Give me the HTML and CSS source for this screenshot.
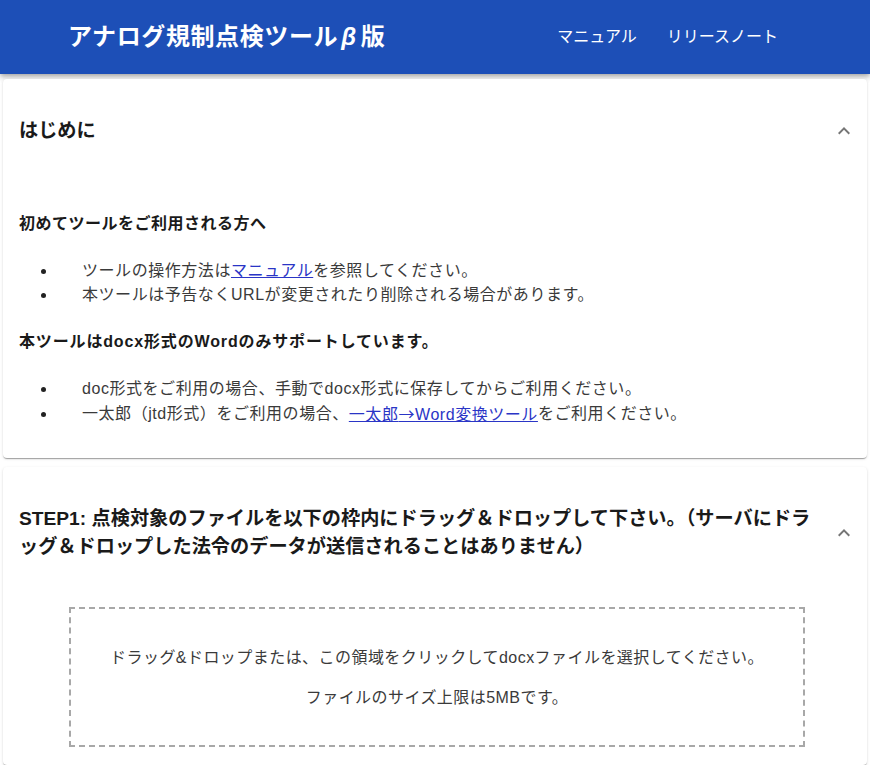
FILE: index.html
```html
<!DOCTYPE html>
<html lang="ja">
<head>
<meta charset="utf-8">
<title>アナログ規制点検ツールβ版</title>
<link rel="stylesheet" href="styles.css">
</head>
<body>
<header class="appbar">
  <h1 class="app-title">アナログ規制点検ツール<span class="beta">β</span>版</h1>
  <nav class="app-nav">
    <a class="nav-link" href="#">マニュアル</a>
    <a class="nav-link" href="#">リリースノート</a>
  </nav>
</header>
<main class="main">
  <section class="card card-intro">
    <div class="summary summary-intro">
      <h2 class="summary-title">はじめに</h2>
      <span class="expand-icon">
        <svg viewBox="0 0 24 24" width="24" height="24"><path d="M12 8l-6 6 1.41 1.41L12 10.83l4.59 4.58L18 14z"/></svg>
      </span>
    </div>
    <div class="details details-intro">
      <p class="lead">初めてツールをご利用される方へ</p>
      <ul class="bullets">
        <li>ツールの操作方法は<a class="link" href="#">マニュアル</a>を参照してください。</li>
        <li>本ツールは予告なくURLが変更されたり削除される場合があります。</li>
      </ul>
      <p class="lead lead-wide">本ツールはdocx形式のWordのみサポートしています。</p>
      <ul class="bullets">
        <li>doc形式をご利用の場合、手動でdocx形式に保存してからご利用ください。</li>
        <li>一太郎（jtd形式）をご利用の場合、<a class="link" href="#">一太郎<span class="arrow">→</span>Word変換ツール</a>をご利用ください。</li>
      </ul>
    </div>
  </section>
  <section class="card card-step">
    <div class="summary summary-step">
      <h2 class="summary-title">STEP1: 点検対象のファイルを以下の枠内にドラッグ＆ドロップして下さい。（サーバにドラッグ＆ドロップした法令のデータが送信されることはありません）</h2>
      <span class="expand-icon">
        <svg viewBox="0 0 24 24" width="24" height="24"><path d="M12 8l-6 6 1.41 1.41L12 10.83l4.59 4.58L18 14z"/></svg>
      </span>
    </div>
    <div class="details details-step">
      <div class="dropzone">
        <p class="drop-text">ドラッグ&amp;ドロップまたは、この領域をクリックしてdocxファイルを選択してください。</p>
        <p class="drop-text">ファイルのサイズ上限は5MBです。</p>
      </div>
    </div>
  </section>
</main>
</body>
</html>
```

FILE: styles.css
```css
* { box-sizing: border-box; }

html, body {
  margin: 0;
  padding: 0;
  background: #ffffff;
}

body {
  font-family: "Liberation Sans", "Noto Sans CJK JP", sans-serif;
  color: #1f1f1f;
}

.appbar {
  height: 74px;
  background: #1d4fb7;
  color: #ffffff;
  display: flex;
  align-items: center;
  justify-content: space-between;
  padding: 0 92px 0 68px;
  box-shadow: 0 2px 4px -1px rgba(0,0,0,0.2), 0 4px 5px 0 rgba(0,0,0,0.14), 0 1px 10px 0 rgba(0,0,0,0.12);
}

.app-title {
  margin: 0;
  font-size: 24px;
  font-weight: 700;
  line-height: 32px;
  letter-spacing: 0.6px;
}

.beta {
  display: inline-block;
  margin: 0 4px 0 3px;
  font-style: italic;
}

.app-nav {
  display: flex;
  gap: 30px;
}

.nav-link {
  color: #ffffff;
  text-decoration: none;
  font-size: 16px;
  line-height: 24px;
}

.main {
  padding: 5px 3px 0;
  display: flex;
  flex-direction: column;
  gap: 9px;
}

.card {
  background: #ffffff;
  border-radius: 4px;
  box-shadow: 0 2px 1px -1px rgba(0,0,0,0.2), 0 1px 1px 0 rgba(0,0,0,0.14), 0 1px 3px 0 rgba(0,0,0,0.12);
}

.summary {
  display: flex;
  align-items: center;
  padding: 0 11px 0 16px;
}

.summary-intro {
  height: 104px;
}

.summary-step {
  padding-top: 38px;
  padding-bottom: 0;
}

.summary-title {
  flex: 1;
  margin: 0;
  font-size: 19.2px;
  font-weight: 700;
  line-height: 28px;
  color: #1a1a1a;
}

.expand-icon {
  width: 24px;
  height: 24px;
  display: flex;
  margin-left: 4px;
}

.expand-icon svg {
  fill: rgba(0,0,0,0.54);
}

.details-intro {
  padding: 29px 16px 31px;
}

.lead {
  margin: 0;
  font-size: 16px;
  font-weight: 700;
  line-height: 24px;
  letter-spacing: 0.5px;
  color: #1a1a1a;
}

.lead-wide {
  letter-spacing: 0.85px;
}

.bullets {
  list-style: none;
  margin: 23px 0;
  padding: 0;
}

.bullets:last-child {
  margin-bottom: 0;
}

.bullets li {
  display: flex;
  align-items: center;
  font-size: 16px;
  line-height: 24px;
  letter-spacing: 0.55px;
  color: #3a3a3a;
}

.bullets li::before {
  content: "";
  flex: none;
  width: 5px;
  height: 5px;
  border-radius: 50%;
  background: #222222;
  margin-left: 22px;
  margin-right: 36px;
}

.link {
  color: #2a35c6;
  text-decoration: underline;
}

.arrow {
  font-family: "Noto Sans CJK JP", sans-serif;
}

.details-step {
  padding: 46px 62px 18px 66px;
}

.dropzone {
  border: 2px dashed #a8a8a8;
  height: 140px;
  display: flex;
  flex-direction: column;
  align-items: center;
  gap: 16px;
  padding-top: 37px;
}

.drop-text {
  margin: 0;
  font-size: 16px;
  line-height: 24px;
  letter-spacing: 0.45px;
  color: #3a3a3a;
  text-align: center;
}
```
